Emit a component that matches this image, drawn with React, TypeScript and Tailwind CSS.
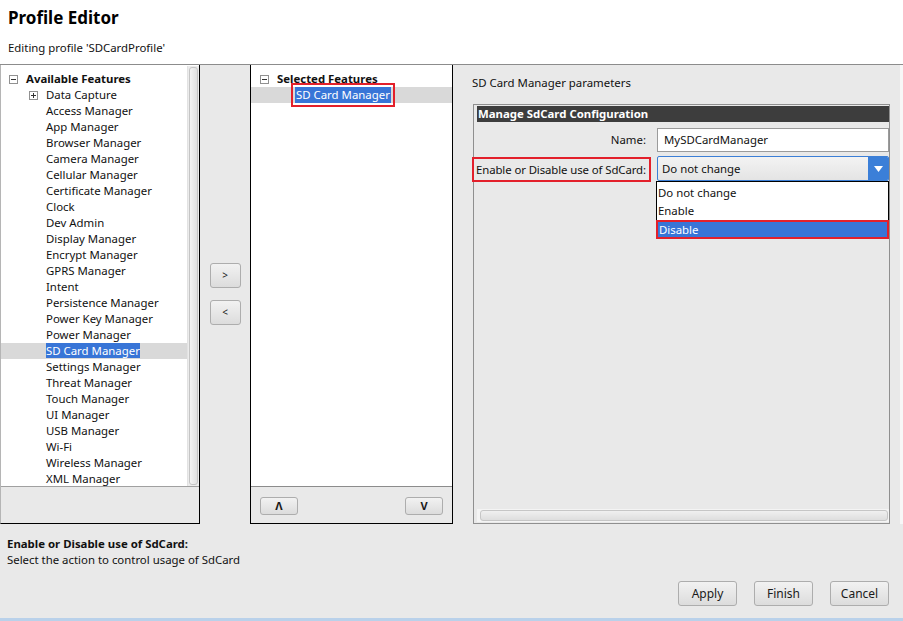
import { ReactNode } from 'react'

const features = [
  'Access Manager',
  'App Manager',
  'Browser Manager',
  'Camera Manager',
  'Cellular Manager',
  'Certificate Manager',
  'Clock',
  'Dev Admin',
  'Display Manager',
  'Encrypt Manager',
  'GPRS Manager',
  'Intent',
  'Persistence Manager',
  'Power Key Manager',
  'Power Manager',
  'SD Card Manager',
  'Settings Manager',
  'Threat Manager',
  'Touch Manager',
  'UI Manager',
  'USB Manager',
  'Wi-Fi',
  'Wireless Manager',
  'XML Manager',
]

function TreeBox({ plus }: { plus?: boolean }) {
  return (
    <span className="relative inline-block w-[9px] h-[9px] border border-[#919191] bg-white shrink-0">
      <span className="absolute left-[1px] top-[3px] w-[5px] h-px bg-[#333]" />
      {plus && <span className="absolute left-[3px] top-[1px] w-px h-[5px] bg-[#333]" />}
    </span>
  )
}

function Btn({ children, className }: { children: ReactNode; className: string }) {
  return (
    <div
      className={`flex items-center justify-center rounded-[3px] border border-[#adadad] bg-gradient-to-b from-[#f2f2f2] to-[#dcdcdc] text-[#1a1a1a] ${className}`}
    >
      {children}
    </div>
  )
}

export default function App() {
  return (
    <div className="w-[903px] h-[621px] bg-[#e9e9e9] flex flex-col text-[11.4px] text-[#111] font-['Noto_Sans',sans-serif] overflow-hidden">
      <div className="h-[64px] bg-white px-[8px] shrink-0">
        <div className="pt-[6px] text-[17px] font-bold leading-[24px] text-black">Profile Editor</div>
        <div className="mt-[10px] leading-[16px]">Editing profile 'SDCardProfile'</div>
      </div>

      <div className="h-[460px] flex shrink-0 border-t border-[#8c8c8c]">
        {/* available */}
        <div className="w-[200px] flex flex-col border-r border-b border-black border-l border-l-[#b5b5b5]">
          <div className="h-[421px] bg-white flex pt-[1px]">
            <div className="flex-1 pt-[5px]">
              <div className="flex items-center h-[16px] pl-[8px] gap-[8px]">
                <TreeBox />
                <span className="font-bold">Available Features</span>
              </div>
              <div className="flex items-center h-[16px] pl-[28px] gap-[8px]">
                <TreeBox plus />
                <span>Data Capture</span>
              </div>
              {features.map((f) => (
                <div
                  key={f}
                  className={`h-[16px] leading-[16px] pl-[45px] ${f === 'SD Card Manager' ? 'bg-[#d9d9d9]' : ''}`}
                >
                  <span className={f === 'SD Card Manager' ? 'bg-[#3875d7] text-white' : ''}>{f}</span>
                </div>
              ))}
            </div>
            <div className="w-[12px] bg-[#ececec] border-l border-[#e2e2e2] p-[1px]">
              <div className="h-full rounded-[3px] border border-[#c4c4c4] bg-gradient-to-r from-[#f4f4f4] to-[#e0e0e0]" />
            </div>
          </div>
          <div className="flex-1 border-t border-[#a0a0a0]" />
        </div>

        {/* move buttons */}
        <div className="w-[50px] flex flex-col items-center pt-[198px] gap-[12px]">
          <Btn className="w-[31px] h-[25px] text-[10px]">&gt;</Btn>
          <Btn className="w-[31px] h-[25px] text-[10px]">&lt;</Btn>
        </div>

        {/* selected */}
        <div className="w-[203px] flex flex-col border-l border-r border-b border-black">
          <div className="h-[421px] bg-white pt-[6px]">
            <div className="flex items-center h-[16px] pl-[9px] gap-[8px]">
              <TreeBox />
              <span className="font-bold">Selected Features</span>
            </div>
            <div className="h-[16px] bg-[#d9d9d9] pl-[44px] flex items-center">
              <span className="outline-2 outline-[#e3202b] outline-offset-[2px] bg-[#3875d7] text-white leading-[16px] px-[1px]">
                SD Card Manager
              </span>
            </div>
          </div>
          <div className="flex-1 border-t border-[#8c8c8c] flex justify-between items-start pt-[10px] px-[9px]">
            <Btn className="w-[38px] h-[18px] text-[11px] font-bold">Λ</Btn>
            <Btn className="w-[38px] h-[18px] text-[11px] font-bold">V</Btn>
          </div>
        </div>

        {/* splitter */}
        <div className="w-[10px] flex justify-center">
          <div className="w-[6px] h-full bg-[radial-gradient(#9a9a9a_0.6px,transparent_0.7px)] bg-[length:2px_2px]" />
        </div>

        {/* parameters */}
        <div className="flex-1 flex flex-col border-r-[3px] border-[#f7f7f7] pl-[9px] pr-[10px]">
          <div className="pt-[10px] h-[39px] leading-[16px]">SD Card Manager parameters</div>
          <div className="flex-1 border border-[#8f8f8f] ml-[1px] flex flex-col pt-[1px] pl-[3px]">
            <div className="h-[16px] bg-[#3d3d3d] text-white font-bold leading-[16px] pl-[1px]">
              Manage SdCard Configuration
            </div>
            <div className="flex items-center mt-[6px] h-[24px]">
              <div className="w-[180px] text-right pr-[11px]">Name:</div>
              <div className="flex-1 h-[24px] bg-white border border-[#9b9b9b] flex items-center pl-[6px]">
                MySDCardManager
              </div>
            </div>
            <div className="flex items-start mt-[4px]">
              <div className="w-[180px] flex">
                <div className="w-[179px] h-[25px] -ml-[5px] mt-[1px] pl-[2px] border-2 border-[#e3202b] flex items-center whitespace-nowrap tracking-[-0.1px] overflow-hidden">
                  Enable or Disable use of SdCard:
                </div>
              </div>
              <div className="flex-1 flex flex-col -ml-[1px]">
                <div className="h-[25px] ml-[1px] rounded-[2px] border border-[#3c7fd6] bg-gradient-to-b from-[#f3f3f3] to-[#e4e4e4] flex items-center overflow-hidden">
                  <span className="flex-1 pl-[4px]">Do not change</span>
                  <div className="w-[20px] h-full bg-[#3b7fd8] flex items-center justify-center">
                    <svg width="9" height="6" viewBox="0 0 9 6">
                      <path d="M0 0h9L4.5 6z" fill="white" />
                    </svg>
                  </div>
                </div>
                <div className="bg-white border border-black leading-[18px] pt-[2px]">
                  <div className="pl-[1px]">Do not change</div>
                  <div className="pl-[1px]">Enable</div>
                  <div className="pl-[1px] bg-[#3875d7] text-white border-2 border-[#e3202b] h-[19px] leading-[15px] -mx-[1px] -mb-[1px]">
                    Disable
                  </div>
                </div>
              </div>
            </div>
            <div className="flex-1" />
            <div className="h-[13px] mb-[1px] pl-[3px] pr-[1px] pt-[1px] bg-[#f4f4f4]">
              <div className="h-[11px] rounded-[3px] border border-[#c6c6c6] bg-gradient-to-b from-[#f0f0f0] to-[#dedede]" />
            </div>
          </div>
        </div>
      </div>

      <div className="flex-1 relative px-[7px] pt-[12px]">
        <div className="font-bold leading-[16px]">Enable or Disable use of SdCard:</div>
        <div className="leading-[16px]">Select the action to control usage of SdCard</div>
        <div className="absolute right-[14px] bottom-[12px] flex gap-[17px]">
          <Btn className="w-[59px] h-[25px] text-[12px]">Apply</Btn>
          <Btn className="w-[59px] h-[25px] text-[12px]">Finish</Btn>
          <Btn className="w-[59px] h-[25px] text-[12px]">Cancel</Btn>
        </div>
      </div>
      <div className="h-[3px] bg-[#b9d1ea] shrink-0" />
    </div>
  )
}
